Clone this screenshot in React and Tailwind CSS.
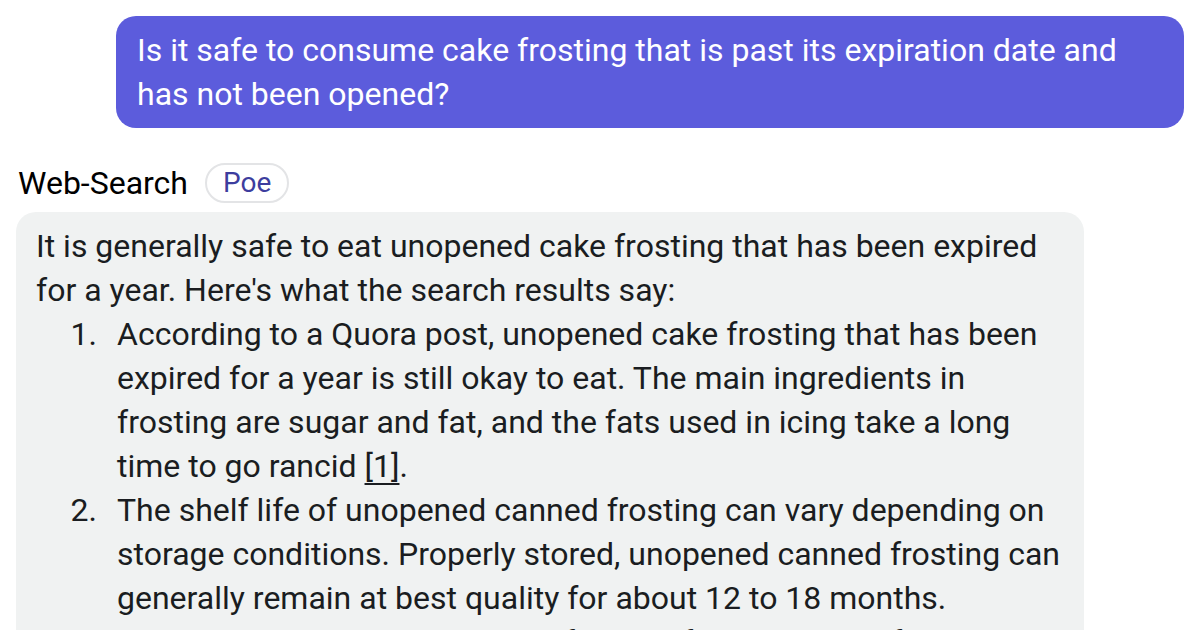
export default function App() {
  const items = [
    {
      n: "1.",
      body: (
        <>
          According to a Quora post, unopened cake frosting that has been
          expired for a year is still okay to eat. The main ingredients in
          frosting are sugar and fat, and the fats used in icing take a long
          time to go rancid{" "}
          <span className="underline underline-offset-[6px] decoration-[1.5px]">[1]</span>.
        </>
      ),
    },
    {
      n: "2.",
      body: (
        <>
          The shelf life of unopened canned frosting can vary depending on
          storage conditions. Properly stored, unopened canned frosting can
          generally remain at best quality for about 12 to 18 months.
        </>
      ),
    },
    {
      n: "3.",
      body: (
        <>
          It is still important to check the frosting for any signs
          of spoilage before eating it.
        </>
      ),
    },
  ]

  return (
    <div className="w-[1200px] h-[630px] overflow-hidden bg-white font-['Roboto',sans-serif]">
      <div className="pt-4 pl-[116px]">
        <div className="w-[1068px] rounded-[20px] bg-[#5c5cdc] px-[21px] py-3 text-[32px] leading-[44px] text-white">
          Is it safe to consume cake frosting that is past its expiration date and
          has not been opened?
        </div>
      </div>

      <div className="mt-[35px] flex items-center pl-[18px]">
        <span className="text-[32px] leading-[40px] text-black">Web-Search</span>
        <span className="ml-[17px] flex h-[40px] items-center rounded-full border-2 border-[#e3e4e6] px-[16px] text-[28px] text-[#3d3d9e]">
          Poe
        </span>
      </div>

      <div className="mt-[9px] ml-4 w-[1068px] rounded-[20px] bg-[#f0f2f2] px-5 pt-3 pb-6 text-[32px] leading-[44px] text-[#1a1d21]">
        <p>
          It is generally safe to eat unopened cake frosting that has been expired
          for a year. Here's what the search results say:
        </p>
        <ol>
          {items.map((item) => (
            <li key={item.n} className="flex">
              <span className="w-[81px] shrink-0 pr-[20px] text-right">{item.n}</span>
              <span className="flex-1">{item.body}</span>
            </li>
          ))}
        </ol>
      </div>
    </div>
  )
}
